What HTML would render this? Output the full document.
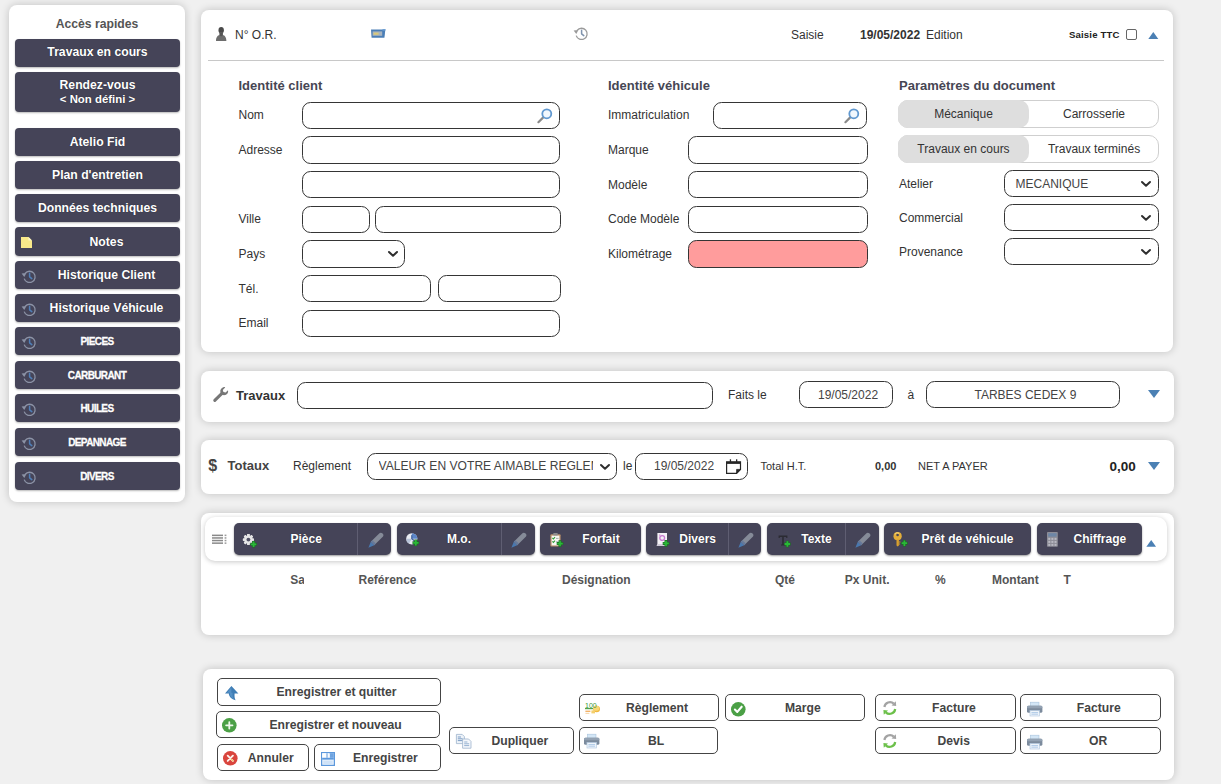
<!DOCTYPE html>
<html lang="fr">
<head>
<meta charset="utf-8">
<title>Ordre de réparation</title>
<style>
*{box-sizing:border-box;margin:0;padding:0}
html,body{width:1221px;height:784px;overflow:hidden}
body{background:#f0f0f0;font-family:"Liberation Sans",Arial,sans-serif;font-size:12px;color:#333;position:relative}
.abs,.panel,.sb,.inp,.lbl,.t,.wb,.db,svg{position:absolute}
svg{overflow:visible}
.panel{background:#fff;border-radius:8px;box-shadow:0 0 9px rgba(0,0,0,.2)}
.sb{left:15px;width:165px;height:28px;background:#454458;border-radius:4px;color:#fff;font-weight:bold;font-size:12.2px;text-align:center;line-height:29px;box-shadow:0 1px 2px rgba(0,0,0,.28);text-shadow:0 0 1px rgba(0,0,0,.5)}
.sb.sm{font-size:10px;letter-spacing:-.62px;-webkit-text-stroke:.3px #fff;padding-right:1px}
.inp{height:27px;border:1px solid #353535;border-radius:8.5px;background:#fff}
.lbl{font-size:12px;color:#333;line-height:14px;white-space:nowrap}
.h{font-weight:bold;font-size:13px;color:#464653}
.t{white-space:nowrap;line-height:14px}
.wb{height:27px;border:1px solid #444;border-radius:5px;background:#fff}
.wt{font-weight:bold;font-size:12.15px;color:#444}
.db{top:523px;height:32px;background:#454458;border-radius:5px;box-shadow:0 1px 2px rgba(0,0,0,.4)}
.dt{font-weight:bold;font-size:12px;color:#fff;top:532.4px;text-shadow:0 0 1px rgba(0,0,0,.5)}
.th{font-weight:bold;color:#555;top:573px}
</style>
</head>
<body>
<div class="panel" style="left:9px;top:5px;width:176px;height:497px"></div>
<div class="t" style="left:9px;width:176px;top:17px;text-align:center;font-weight:bold;font-size:12.2px;color:#555">Accès rapides</div>
<div class="sb" style="top:39px;line-height:27px">Travaux en cours</div>
<div class="sb" style="top:72px;height:40px;line-height:14px;padding-top:5.5px">Rendez-vous<br><span style="font-size:11.4px">&lt; Non défini &gt;</span></div>
<div class="sb" style="top:128px">Atelio Fid</div>
<div class="sb" style="top:161px">Plan d'entretien</div>
<div class="sb" style="top:194px">Données techniques</div>
<div class="sb" style="top:227px;height:29px;line-height:30px;padding-left:18px">Notes</div><svg style="left:21px;top:237px" width="11" height="11" viewBox="0 0 11 11"><path d="M0 0 H7.5 L11 3.5 V11 H0 Z" fill="#f8e98a"/><path d="M7.5 0 L11 3.5 H7.5 Z" fill="#fdf6c8"/></svg>
<div class="sb" style="top:261px;padding-left:18px">Historique Client</div><svg style="left:21px;top:270px" width="15" height="13" viewBox="0 0 15 13"><path d="M4.1 3.4 A5.6 5.6 0 1 1 3.2 8.6" fill="none" stroke="#8c93a6" stroke-width="1.3"/><path d="M0.6 3.6 L5.4 3.0 L3.3 6.9 Z" fill="#8c93a6"/><path d="M8.6 3.3 V6.8 L10.8 8.6" fill="none" stroke="#4f7fb8" stroke-width="1.5" stroke-linecap="round" stroke-linejoin="round"/></svg>
<div class="sb" style="top:294px;padding-left:18px">Historique Véhicule</div><svg style="left:21px;top:303px" width="15" height="13" viewBox="0 0 15 13"><path d="M4.1 3.4 A5.6 5.6 0 1 1 3.2 8.6" fill="none" stroke="#8c93a6" stroke-width="1.3"/><path d="M0.6 3.6 L5.4 3.0 L3.3 6.9 Z" fill="#8c93a6"/><path d="M8.6 3.3 V6.8 L10.8 8.6" fill="none" stroke="#4f7fb8" stroke-width="1.5" stroke-linecap="round" stroke-linejoin="round"/></svg>
<div class="sb sm" style="top:327px">PIECES</div><svg style="left:21px;top:336px" width="15" height="13" viewBox="0 0 15 13"><path d="M4.1 3.4 A5.6 5.6 0 1 1 3.2 8.6" fill="none" stroke="#8c93a6" stroke-width="1.3"/><path d="M0.6 3.6 L5.4 3.0 L3.3 6.9 Z" fill="#8c93a6"/><path d="M8.6 3.3 V6.8 L10.8 8.6" fill="none" stroke="#4f7fb8" stroke-width="1.5" stroke-linecap="round" stroke-linejoin="round"/></svg>
<div class="sb sm" style="top:361px">CARBURANT</div><svg style="left:21px;top:370px" width="15" height="13" viewBox="0 0 15 13"><path d="M4.1 3.4 A5.6 5.6 0 1 1 3.2 8.6" fill="none" stroke="#8c93a6" stroke-width="1.3"/><path d="M0.6 3.6 L5.4 3.0 L3.3 6.9 Z" fill="#8c93a6"/><path d="M8.6 3.3 V6.8 L10.8 8.6" fill="none" stroke="#4f7fb8" stroke-width="1.5" stroke-linecap="round" stroke-linejoin="round"/></svg>
<div class="sb sm" style="top:394px">HUILES</div><svg style="left:21px;top:403px" width="15" height="13" viewBox="0 0 15 13"><path d="M4.1 3.4 A5.6 5.6 0 1 1 3.2 8.6" fill="none" stroke="#8c93a6" stroke-width="1.3"/><path d="M0.6 3.6 L5.4 3.0 L3.3 6.9 Z" fill="#8c93a6"/><path d="M8.6 3.3 V6.8 L10.8 8.6" fill="none" stroke="#4f7fb8" stroke-width="1.5" stroke-linecap="round" stroke-linejoin="round"/></svg>
<div class="sb sm" style="top:428px">DEPANNAGE</div><svg style="left:21px;top:437px" width="15" height="13" viewBox="0 0 15 13"><path d="M4.1 3.4 A5.6 5.6 0 1 1 3.2 8.6" fill="none" stroke="#8c93a6" stroke-width="1.3"/><path d="M0.6 3.6 L5.4 3.0 L3.3 6.9 Z" fill="#8c93a6"/><path d="M8.6 3.3 V6.8 L10.8 8.6" fill="none" stroke="#4f7fb8" stroke-width="1.5" stroke-linecap="round" stroke-linejoin="round"/></svg>
<div class="sb sm" style="top:462px">DIVERS</div><svg style="left:21px;top:471px" width="15" height="13" viewBox="0 0 15 13"><path d="M4.1 3.4 A5.6 5.6 0 1 1 3.2 8.6" fill="none" stroke="#8c93a6" stroke-width="1.3"/><path d="M0.6 3.6 L5.4 3.0 L3.3 6.9 Z" fill="#8c93a6"/><path d="M8.6 3.3 V6.8 L10.8 8.6" fill="none" stroke="#4f7fb8" stroke-width="1.5" stroke-linecap="round" stroke-linejoin="round"/></svg>
<div class="panel" style="left:201px;top:10px;width:972px;height:342px"></div>
<div class="abs" style="left:208px;top:60px;width:956px;height:1px;background:#c8c8c8"></div>
<svg style="left:215.6px;top:27.3px" width="10.4" height="14" viewBox="0 0 10.4 14"><ellipse cx="5.2" cy="3.3" rx="2.7" ry="3.3" fill="#4a4a4a"/><path d="M3.6 5.5 H6.8 V8 C8.8 8.6 10.2 9.8 10.4 14 H0 C0.2 9.8 1.6 8.6 3.6 8 Z" fill="#6d6d6d"/><path d="M3.6 6 H6.8 V8.2 L5.2 9.6 L3.6 8.2Z" fill="#555"/></svg>
<div class="t" style="left:235px;top:28px">N° O.R.</div>
<svg style="left:371px;top:29.4px" width="14.4" height="8.8" viewBox="0 0 14.4 8.8"><path d="M0 0.6 H14.4 L13.4 8.8 H0.6 Z" fill="#4b7eb6"/><rect x="1.6" y="2.4" width="9.6" height="4.4" fill="#a9b4bf"/><rect x="2.6" y="3.6" width="5" height="2.2" fill="#d9c97a"/><rect x="11.5" y="0" width="3" height="1.6" fill="#6e9fd3"/></svg>
<svg style="left:573px;top:27.3px" width="15" height="13" viewBox="0 0 15 13"><path d="M4.1 3.4 A5.6 5.6 0 1 1 3.2 8.6" fill="none" stroke="#9a9a9a" stroke-width="1.3"/><path d="M0.6 3.6 L5.4 3.0 L3.3 6.9 Z" fill="#9a9a9a"/><path d="M8.6 3.3 V6.8 L10.8 8.6" fill="none" stroke="#7f93ad" stroke-width="1.5" stroke-linecap="round" stroke-linejoin="round"/></svg>
<div class="t" style="left:791px;top:28px">Saisie</div>
<div class="t" style="left:860px;top:28px;font-weight:bold">19/05/2022</div>
<div class="t" style="left:926px;top:28px">Edition</div>
<div class="t" style="left:1069px;top:27.7px;font-weight:bold;font-size:9.6px;letter-spacing:.15px;color:#222">Saisie TTC</div>
<div class="abs" style="left:1126px;top:29px;width:11px;height:11px;border:1px solid #666;border-radius:2px;background:#fff"></div>
<svg style="left:1148.4px;top:31.8px" width="10.6" height="7" viewBox="0 0 10 7"><path d="M5 0 L10 7 H0 Z" fill="#4b80b4"/></svg>
<div class="t h" style="left:238.5px;top:79px">Identité client</div>
<div class="lbl" style="left:238.5px;top:108px">Nom</div>
<div class="lbl" style="left:238.5px;top:143px">Adresse</div>
<div class="lbl" style="left:238.5px;top:212px">Ville</div>
<div class="lbl" style="left:238.5px;top:247px">Pays</div>
<div class="lbl" style="left:238.5px;top:282px">Tél.</div>
<div class="lbl" style="left:238.5px;top:316px">Email</div>
<div class="inp" style="left:302px;top:102px;width:258px;height:27px"></div>
<div class="inp" style="left:302px;top:136px;width:258px;height:28px"></div>
<div class="inp" style="left:302px;top:171px;width:258px;height:27px"></div>
<div class="inp" style="left:302px;top:206px;width:68px;height:27px"></div>
<div class="inp" style="left:375px;top:206px;width:186px;height:27px"></div>
<div class="inp" style="left:302px;top:240px;width:103px;height:28px"></div>
<div class="inp" style="left:302px;top:275px;width:129px;height:27px"></div>
<div class="inp" style="left:438px;top:275px;width:123px;height:27px"></div>
<div class="inp" style="left:302px;top:310px;width:258px;height:27px"></div>
<svg style="left:536.5px;top:108.5px" width="15" height="14" viewBox="0 0 15 14"><path d="M6 8.6 L1.4 13.2" stroke="#8a8a8a" stroke-width="2.2" stroke-linecap="round"/><circle cx="9.8" cy="4.8" r="4.5" fill="#f1f7fd" stroke="#6098d0" stroke-width="1.8"/></svg>
<svg style="left:387.5px;top:251px" width="10" height="6" viewBox="0 0 10 6"><path d="M1 1 L5 4.8 L9 1" fill="none" stroke="#2e2e2e" stroke-width="2" stroke-linecap="round" stroke-linejoin="round"/></svg>
<div class="t h" style="left:608px;top:79px">Identité véhicule</div>
<div class="lbl" style="left:608px;top:108px">Immatriculation</div>
<div class="lbl" style="left:608px;top:143px">Marque</div>
<div class="lbl" style="left:608px;top:178px">Modèle</div>
<div class="lbl" style="left:608px;top:212px">Code Modèle</div>
<div class="lbl" style="left:608px;top:247px">Kilométrage</div>
<div class="inp" style="left:713px;top:102px;width:154px"></div>
<div class="inp" style="left:688px;top:136px;width:180px;height:28px"></div>
<div class="inp" style="left:688px;top:171px;width:180px"></div>
<div class="inp" style="left:688px;top:206px;width:180px"></div>
<div class="inp" style="left:688px;top:240px;width:180px;height:28px;background:#ff9c9c"></div>
<svg style="left:844px;top:108.5px" width="15" height="14" viewBox="0 0 15 14"><path d="M6 8.6 L1.4 13.2" stroke="#8a8a8a" stroke-width="2.2" stroke-linecap="round"/><circle cx="9.8" cy="4.8" r="4.5" fill="#f1f7fd" stroke="#6098d0" stroke-width="1.8"/></svg>
<div class="t h" style="left:899px;top:79px">Paramètres du document</div>
<div class="abs" style="left:898px;top:100px;width:261px;height:28px;border:1px solid #cfcfcf;border-radius:10px;background:#fff"></div>
<div class="abs" style="left:898px;top:100px;width:131px;height:28px;background:#dedede;border-radius:10px"></div>
<div class="t" style="left:898px;width:131px;top:107px;text-align:center">Mécanique</div>
<div class="t" style="left:1029px;width:130px;top:107px;text-align:center">Carrosserie</div>
<div class="abs" style="left:898px;top:135px;width:261px;height:28px;border:1px solid #cfcfcf;border-radius:10px;background:#fff"></div>
<div class="abs" style="left:898px;top:135px;width:131px;height:28px;background:#dedede;border-radius:10px"></div>
<div class="t" style="left:898px;width:131px;top:142px;text-align:center">Travaux en cours</div>
<div class="t" style="left:1029px;width:130px;top:142px;text-align:center">Travaux terminés</div>
<div class="lbl" style="left:899px;top:177px">Atelier</div>
<div class="lbl" style="left:899px;top:211px">Commercial</div>
<div class="lbl" style="left:899px;top:245px">Provenance</div>
<div class="inp" style="left:1004px;top:170px;width:155px"></div>
<svg style="left:1141px;top:181px" width="10" height="6" viewBox="0 0 10 6"><path d="M1 1 L5 4.8 L9 1" fill="none" stroke="#2e2e2e" stroke-width="2" stroke-linecap="round" stroke-linejoin="round"/></svg>
<div class="inp" style="left:1004px;top:204px;width:155px"></div>
<svg style="left:1141px;top:215px" width="10" height="6" viewBox="0 0 10 6"><path d="M1 1 L5 4.8 L9 1" fill="none" stroke="#2e2e2e" stroke-width="2" stroke-linecap="round" stroke-linejoin="round"/></svg>
<div class="inp" style="left:1004px;top:238px;width:155px"></div>
<svg style="left:1141px;top:249px" width="10" height="6" viewBox="0 0 10 6"><path d="M1 1 L5 4.8 L9 1" fill="none" stroke="#2e2e2e" stroke-width="2" stroke-linecap="round" stroke-linejoin="round"/></svg>
<div class="t" style="left:1015.5px;top:177px;color:#444">MECANIQUE</div>
<div class="panel" style="left:201px;top:371px;width:973px;height:51px"></div>
<svg style="left:212.7px;top:387px" width="15.5" height="15.3" viewBox="0 0 15.5 15.3"><path d="M1.8 13.4 L9.2 6.2" stroke="#777" stroke-width="3.1" stroke-linecap="round"/><path d="M12.2 0.4 L9.8 2.9 L10.4 5 L12.6 5.6 L15 3.2 C15.6 5.4 14.4 7.4 12.4 8 C10.2 8.6 8 7.4 7.4 5.2 C6.8 3 8.2 0.8 10.4 0.2 C11 0 11.6 0.1 12.2 0.4Z" fill="#777"/></svg>
<div class="t h" style="left:236px;top:389px;color:#333">Travaux</div>
<div class="inp" style="left:297px;top:382px;width:416px"></div>
<div class="t" style="left:728px;top:388px">Faits le</div>
<div class="inp" style="left:799px;top:381px;width:94px"></div>
<div class="t" style="left:818px;top:388px;color:#444">19/05/2022</div>
<div class="t" style="left:907.5px;top:388px">à</div>
<div class="inp" style="left:926px;top:381px;width:194px"></div>
<div class="t" style="left:974.5px;top:388px;color:#444">TARBES CEDEX 9</div>
<svg style="left:1148px;top:390px" width="12" height="8" viewBox="0 0 12 8"><path d="M0 0 H12 L6 8 Z" fill="#4b80b4"/></svg>
<div class="panel" style="left:201px;top:440px;width:973px;height:54px"></div>
<div class="t" style="left:208.3px;top:457px;font-weight:bold;font-size:16px;line-height:18px;color:#444">$</div>
<div class="t h" style="left:227.5px;top:459px;color:#444">Totaux</div>
<div class="t" style="left:293px;top:459px">Règlement</div>
<div class="inp" style="left:367px;top:453px;width:250px"></div>
<div class="t" style="left:378.5px;top:459px;width:214.8px;overflow:hidden;color:#444;font-size:12.1px">VALEUR EN VOTRE AIMABLE REGLEMENT</div>
<svg style="left:599.5px;top:464px" width="10" height="6" viewBox="0 0 10 6"><path d="M1 1 L5 4.8 L9 1" fill="none" stroke="#2e2e2e" stroke-width="2" stroke-linecap="round" stroke-linejoin="round"/></svg>
<div class="t" style="left:623px;top:459px">le</div>
<div class="inp" style="left:635px;top:453px;width:113px"></div>
<div class="t" style="left:654px;top:459px;color:#444">19/05/2022</div>
<svg style="left:726px;top:459px" width="15.1" height="15" viewBox="0 0 15.1 15"><path d="M0.6 2.8 H14.5 V10.4 L10.6 14.3 H0.6 Z" fill="#fff" stroke="#262626" stroke-width="1.2" stroke-linejoin="miter"/><path d="M0.6 2.8 H14.5 V4.9 H0.6Z" fill="#262626"/><path d="M14.5 10.4 H10.6 V14.3 Z" fill="#262626" stroke="#262626" stroke-width="0.8"/><rect x="3.8" y="0.3" width="1.3" height="2.6" fill="#262626"/><rect x="10" y="0.3" width="1.3" height="2.6" fill="#262626"/></svg>
<div class="t" style="left:760.5px;top:459px;font-size:11px">Total H.T.</div>
<div class="t" style="left:875px;top:459px;font-size:11px;font-weight:bold">0,00</div>
<div class="t" style="left:918px;top:459px;font-size:11px">NET A PAYER</div>
<div class="t" style="left:1109.5px;top:459.7px;font-size:13.5px;font-weight:bold;color:#222">0,00</div>
<svg style="left:1148px;top:461.5px" width="12" height="8" viewBox="0 0 12 8"><path d="M0 0 H12 L6 8 Z" fill="#4b80b4"/></svg>
<div class="panel" style="left:201px;top:513px;width:973px;height:122px"></div>
<div class="panel" style="left:205px;top:517px;width:962px;height:44px;border-radius:10px;box-shadow:0 1px 5px rgba(0,0,0,.22)"></div>
<svg style="left:212px;top:534px" width="15" height="10" viewBox="0 0 15 10"><rect x="0" y="0.6" width="11" height="1.5" fill="#8a8a8a"/><rect x="12.6" y="0.6" width="1.8" height="1.5" fill="#9a9a9a"/><rect x="0" y="3.2" width="11" height="1.5" fill="#8a8a8a"/><rect x="12.6" y="3.2" width="1.8" height="1.5" fill="#9a9a9a"/><rect x="0" y="5.8" width="11" height="1.5" fill="#8a8a8a"/><rect x="12.6" y="5.8" width="1.8" height="1.5" fill="#9a9a9a"/><rect x="0" y="8.4" width="11" height="1.5" fill="#8a8a8a"/><rect x="12.6" y="8.4" width="1.8" height="1.5" fill="#9a9a9a"/></svg>
<div class="db" style="left:234px;width:157px"></div>
<div class="abs" style="left:357px;top:523px;width:1px;height:32px;background:#5f5e72"></div>
<svg style="left:243px;top:533.5px" width="14" height="14" viewBox="0 0 14 14"><rect x="4.2" y="0.1" width="2.4" height="11" rx="0.5" fill="#e6e6e6" transform="rotate(0 5.4 5.6)"/><rect x="4.2" y="0.1" width="2.4" height="11" rx="0.5" fill="#e6e6e6" transform="rotate(45 5.4 5.6)"/><rect x="4.2" y="0.1" width="2.4" height="11" rx="0.5" fill="#e6e6e6" transform="rotate(90 5.4 5.6)"/><rect x="4.2" y="0.1" width="2.4" height="11" rx="0.5" fill="#e6e6e6" transform="rotate(135 5.4 5.6)"/><rect x="4.2" y="0.1" width="2.4" height="11" rx="0.5" fill="#e6e6e6" transform="rotate(180 5.4 5.6)"/><rect x="4.2" y="0.1" width="2.4" height="11" rx="0.5" fill="#e6e6e6" transform="rotate(225 5.4 5.6)"/><rect x="4.2" y="0.1" width="2.4" height="11" rx="0.5" fill="#e6e6e6" transform="rotate(270 5.4 5.6)"/><rect x="4.2" y="0.1" width="2.4" height="11" rx="0.5" fill="#e6e6e6" transform="rotate(315 5.4 5.6)"/><circle cx="5.4" cy="5.6" r="4.1" fill="#e6e6e6"/><circle cx="5.4" cy="5.6" r="1.9" fill="#505064"/><path d="M8.8 10.3 H12.4 M10.6 8.5 V12.1" stroke="#1e6a25" stroke-width="3" stroke-linecap="square"/><path d="M8.8 10.3 H12.4 M10.6 8.5 V12.1" stroke="#2ab838" stroke-width="1.8" stroke-linecap="square"/></svg>
<div class="t dt" style="left:290.5px">Pièce</div>
<svg style="left:367.7px;top:531.5px" width="16" height="16" viewBox="0 0 16 16"><path d="M2.8 9.8 L11.2 1.4 C12.2 0.4 13.6 0.6 14.6 1.6 C15.6 2.6 15.8 3.8 14.8 4.8 L6.2 13.2 Z" fill="#858b98"/><path d="M2.8 9.8 L6.2 13.2 L0.4 15.8 Z" fill="#4a78ae"/><path d="M4.4 8.2 L7.8 11.6 L6.2 13.2 L2.8 9.8Z" fill="#66799a"/></svg>
<div class="db" style="left:397px;width:138px"></div>
<div class="abs" style="left:501px;top:523px;width:1px;height:32px;background:#5f5e72"></div>
<svg style="left:405.8px;top:533.2px" width="13" height="13" viewBox="0 0 13 13"><circle cx="5.8" cy="5.8" r="5.6" fill="#e9ecf2"/><path d="M5.8 5.8 V0.2 A5.6 5.6 0 0 1 11.4 5.8 Z" fill="#5b86c9"/><path d="M5.8 5.8 H0.2 A5.6 5.6 0 0 0 3 10.6 Z" fill="#b7c3d8"/><path d="M5.8 2.6 V5.8 L8 7.4" fill="none" stroke="#3d5f99" stroke-width="1.2" stroke-linecap="round"/><path d="M8 9.8 H11.6 M9.8 8 V11.6" stroke="#1e6a25" stroke-width="3" stroke-linecap="square"/><path d="M8 9.8 H11.6 M9.8 8 V11.6" stroke="#2ab838" stroke-width="1.8" stroke-linecap="square"/></svg>
<div class="t dt" style="left:447px">M.o.</div>
<svg style="left:511px;top:531.5px" width="16" height="16" viewBox="0 0 16 16"><path d="M2.8 9.8 L11.2 1.4 C12.2 0.4 13.6 0.6 14.6 1.6 C15.6 2.6 15.8 3.8 14.8 4.8 L6.2 13.2 Z" fill="#858b98"/><path d="M2.8 9.8 L6.2 13.2 L0.4 15.8 Z" fill="#4a78ae"/><path d="M4.4 8.2 L7.8 11.6 L6.2 13.2 L2.8 9.8Z" fill="#66799a"/></svg>
<div class="db" style="left:540px;width:101px"></div>
<svg style="left:550.2px;top:532.8px" width="13" height="13.6" viewBox="0 0 13 13.6"><rect x="0.4" y="1.2" width="10.2" height="12.2" rx="1" fill="#b9906a"/><rect x="1.6" y="2.6" width="7.8" height="9.8" fill="#f7f7f2"/><rect x="3.2" y="0" width="4.6" height="2.6" rx="0.8" fill="#8c8c8c"/><path d="M2.4 5 L3.4 6 L5 4.2 M2.4 8.4 L3.4 9.4 L5 7.6" fill="none" stroke="#2f9e3a" stroke-width="1.1"/><path d="M6 5.4 H8.6 M6 8.8 H8" stroke="#9aa" stroke-width="0.9"/><path d="M8.2 10.6 H11.8 M10 8.8 V12.4" stroke="#1e6a25" stroke-width="3" stroke-linecap="square"/><path d="M8.2 10.6 H11.8 M10 8.8 V12.4" stroke="#2ab838" stroke-width="1.8" stroke-linecap="square"/></svg>
<div class="t dt" style="left:582.3px">Forfait</div>
<div class="db" style="left:646px;width:115px"></div>
<div class="abs" style="left:728px;top:523px;width:1px;height:32px;background:#5f5e72"></div>
<svg style="left:656.3px;top:533px" width="13" height="13.4" viewBox="0 0 13 13.4"><path d="M1.4 0 H11 V10.6 C11 12 10.2 13 8.8 13 H0.2 C1.2 12.6 1.4 11.8 1.4 11 Z" fill="#f3f1f6"/><path d="M0.2 13 H8.8 C8 12.4 8 11.6 8 11 H1.4 C1.4 11.8 1.2 12.6 0.2 13Z" fill="#cfcbd8"/><circle cx="6.2" cy="5" r="2.4" fill="none" stroke="#c77ad0" stroke-width="1.3"/><rect x="3" y="1.4" width="1.4" height="1.4" fill="#d7a0dc"/><path d="M8.2 10.4 H11.8 M10 8.6 V12.2" stroke="#1e6a25" stroke-width="3" stroke-linecap="square"/><path d="M8.2 10.4 H11.8 M10 8.6 V12.2" stroke="#2ab838" stroke-width="1.8" stroke-linecap="square"/></svg>
<div class="t dt" style="left:679.3px">Divers</div>
<svg style="left:738px;top:531.5px" width="16" height="16" viewBox="0 0 16 16"><path d="M2.8 9.8 L11.2 1.4 C12.2 0.4 13.6 0.6 14.6 1.6 C15.6 2.6 15.8 3.8 14.8 4.8 L6.2 13.2 Z" fill="#858b98"/><path d="M2.8 9.8 L6.2 13.2 L0.4 15.8 Z" fill="#4a78ae"/><path d="M4.4 8.2 L7.8 11.6 L6.2 13.2 L2.8 9.8Z" fill="#66799a"/></svg>
<div class="db" style="left:767px;width:112px"></div>
<div class="abs" style="left:845px;top:523px;width:1px;height:32px;background:#5f5e72"></div>
<svg style="left:778.4px;top:534.5px" width="12.4" height="12" viewBox="0 0 12.4 12"><path d="M0.6 0.6 H9.4 V3 H8.2 V2 H5.8 V9.4 H7 V10.6 H3 V9.4 H4.2 V2 H1.8 V3 H0.6 Z" fill="#2b2b33"/><path d="M7.6 9 H11.2 M9.4 7.2 V10.8" stroke="#1e6a25" stroke-width="3" stroke-linecap="square"/><path d="M7.6 9 H11.2 M9.4 7.2 V10.8" stroke="#2ab838" stroke-width="1.8" stroke-linecap="square"/></svg>
<div class="t dt" style="left:801.2px">Texte</div>
<svg style="left:855px;top:531.5px" width="16" height="16" viewBox="0 0 16 16"><path d="M2.8 9.8 L11.2 1.4 C12.2 0.4 13.6 0.6 14.6 1.6 C15.6 2.6 15.8 3.8 14.8 4.8 L6.2 13.2 Z" fill="#858b98"/><path d="M2.8 9.8 L6.2 13.2 L0.4 15.8 Z" fill="#4a78ae"/><path d="M4.4 8.2 L7.8 11.6 L6.2 13.2 L2.8 9.8Z" fill="#66799a"/></svg>
<div class="db" style="left:884px;width:147px"></div>
<svg style="left:892.7px;top:532px" width="14.6" height="14.6" viewBox="0 0 14.6 14.6"><circle cx="4.6" cy="4.2" r="4.1" fill="#e3ae3a"/><circle cx="4.6" cy="3" r="1.3" fill="#454458"/><path d="M3.5 7.6 H5.9 V13.4 L4.7 14.4 L3.5 13.4 Z" fill="#d9a02e"/><path d="M5.9 9.4 H7.4 V10.6 H5.9 M5.9 11.4 H7 V12.6 H5.9" fill="#d9a02e"/><path d="M2 2.2 A3 3 0 0 1 6 1.2" fill="none" stroke="#f6dc8a" stroke-width="0.9"/><path d="M9.6 11.2 H13.2 M11.4 9.4 V13" stroke="#1e6a25" stroke-width="3" stroke-linecap="square"/><path d="M9.6 11.2 H13.2 M11.4 9.4 V13" stroke="#2ab838" stroke-width="1.8" stroke-linecap="square"/></svg>
<div class="t dt" style="left:921.5px">Prêt de véhicule</div>
<div class="db" style="left:1037px;width:105px"></div>
<svg style="left:1047.2px;top:532px" width="10.8" height="14.8" viewBox="0 0 10.8 14.8"><rect x="0" y="0" width="10.8" height="14.8" rx="0.8" fill="#8d8d97"/><rect x="1.2" y="1.2" width="8.4" height="3.4" fill="#6d86a6"/><rect x="1.3" y="5.9" width="2" height="2" fill="#b9b9c2"/><rect x="4.4" y="5.9" width="2" height="2" fill="#b9b9c2"/><rect x="7.5" y="5.9" width="2" height="2" fill="#b9b9c2"/><rect x="1.3" y="8.9" width="2" height="2" fill="#b9b9c2"/><rect x="4.4" y="8.9" width="2" height="2" fill="#b9b9c2"/><rect x="7.5" y="8.9" width="2" height="2" fill="#b9b9c2"/><rect x="1.3" y="11.9" width="2" height="2" fill="#b9b9c2"/><rect x="4.4" y="11.9" width="2" height="2" fill="#b9b9c2"/><rect x="7.5" y="11.9" width="2" height="2" fill="#b9b9c2"/></svg>
<div class="t dt" style="left:1073.5px">Chiffrage</div>
<svg style="left:1145.5px;top:540.3px" width="10.4" height="6.8" viewBox="0 0 10 7"><path d="M5 0 L10 7 H0 Z" fill="#4b80b4"/></svg>
<div class="t th" style="left:290.3px;width:13.6px;overflow:hidden">Sai</div>
<div class="t th" style="left:358.5px">Reférence</div>
<div class="t th" style="left:562px">Désignation</div>
<div class="t th" style="left:775px">Qté</div>
<div class="t th" style="left:844.8px">Px Unit.</div>
<div class="t th" style="left:935px">%</div>
<div class="t th" style="left:992px">Montant</div>
<div class="t th" style="left:1063.5px">T</div>
<div class="panel" style="left:203px;top:669px;width:971px;height:111px"></div>
<div class="wb" style="left:217px;top:678px;width:224px;height:28px"></div>
<svg style="left:225.3px;top:686.3px" width="13.4" height="14.3" viewBox="0 0 13.4 14.3"><path d="M6.4 0 L13.4 7.6 H9.6 C9.4 10.4 9.6 12.4 10.6 14.3 C6.6 13.4 4 11 3.8 7.6 H0 Z" fill="#3e7db5"/><path d="M6.4 1.2 L1.8 6.8 H4.6 C4.8 10.2 6.4 12 8.8 13 C7.6 11.2 7.4 9.4 7.6 6.8 H6.4Z" fill="#6aa3d6" opacity=".5"/></svg>
<div class="t wt" style="left:276.5px;top:685px">Enregistrer et quitter</div>
<div class="wb" style="left:216px;top:711px;width:224px;height:27px"></div>
<svg style="left:222.2px;top:718.3px" width="14.6" height="14.6" viewBox="0 0 14.6 14.6"><circle cx="7.3" cy="7.3" r="7.3" fill="#4ba046"/><path d="M4.1 7.3 H10.5 M7.3 4.1 V10.5" stroke="#eef8ec" stroke-width="1.8" stroke-linecap="round"/></svg>
<div class="t wt" style="left:269.5px;top:718px">Enregistrer et nouveau</div>
<div class="wb" style="left:217px;top:744px;width:92px;height:27px"></div>
<svg style="left:223.2px;top:751.2px" width="14.6" height="14.6" viewBox="0 0 14.6 14.6"><circle cx="7.3" cy="7.3" r="7.3" fill="#d9453d"/><path d="M4.7 4.7 L9.9 9.9 M9.9 4.7 L4.7 9.9" stroke="#fdf3ee" stroke-width="1.9" stroke-linecap="round"/><path d="M8.1 8.1 L9.8 9.8" stroke="#f3c56a" stroke-width="1.2" stroke-linecap="round"/></svg>
<div class="t wt" style="left:247.8px;top:751px">Annuler</div>
<div class="wb" style="left:314px;top:744px;width:127px;height:27px"></div>
<svg style="left:321px;top:751.7px" width="14" height="14" viewBox="0 0 14 14"><path d="M0.6 0.6 H13.4 V13.4 H0.6 Z" fill="#e4effb" stroke="#5c98dc" stroke-width="1.2"/><rect x="1.2" y="1.2" width="6.6" height="4.6" fill="#fdfeff"/><rect x="9" y="1.2" width="3.8" height="4.6" fill="#6fa4e0"/><rect x="1.2" y="5.8" width="11.6" height="1.8" fill="#5c98dc"/><rect x="2.4" y="8.8" width="9.2" height="4" fill="#cfe2f7"/><path d="M6 1.2 V5.8" stroke="#5c98dc" stroke-width="1"/></svg>
<div class="t wt" style="left:353px;top:751px">Enregistrer</div>
<div class="wb" style="left:449px;top:727px;width:125px;height:27px"></div>
<svg style="left:456.2px;top:734px" width="15.4" height="14.6" viewBox="0 0 15.4 14.6"><path d="M0.4 0.4 H6.2 L8.4 2.6 V9.6 H0.4 Z" fill="#eef3f9" stroke="#9db4cd" stroke-width="0.8"/><path d="M1.8 3 H5 M1.8 4.8 H6.6 M1.8 6.6 H6.6" stroke="#6f93bd" stroke-width="0.9"/><path d="M6.6 5 H12.6 L15 7.4 V14.2 H6.6 Z" fill="#f4f7fb" stroke="#9db4cd" stroke-width="0.8"/><path d="M8.2 8 H11.4 M8.2 9.8 H13.2 M8.2 11.6 H13.2" stroke="#8aa9cc" stroke-width="0.9"/></svg>
<div class="t wt" style="left:491.5px;top:734px">Dupliquer</div>
<div class="wb" style="left:579px;top:694px;width:140px;height:27px"></div>
<svg style="left:585px;top:701px" width="15.4" height="14" viewBox="0 0 15.4 14"><path d="M0 7.6 H9.6" stroke="#52a34a" stroke-width="1.2"/><ellipse cx="11.6" cy="8" rx="3.4" ry="3.2" fill="#f0b840"/><ellipse cx="11.2" cy="7.2" rx="3" ry="2.6" fill="#f8d777"/><path d="M0.4 9.6 H5.4 V11 H0.4Z" fill="#f2b26a"/><path d="M6.4 9.4 H10 V12.4 H6.4Z" fill="#f4cf6c"/><path d="M0.4 11.8 H4.4 V13 H0.4Z" fill="#f6d9b0"/><text x="0" y="6.6" font-family="Liberation Sans,sans-serif" font-size="7" fill="#3f9a3a">100</text></svg>
<div class="t wt" style="left:626px;top:701px">Règlement</div>
<div class="wb" style="left:579px;top:727px;width:139px;height:27px"></div>
<svg style="left:584px;top:734px" width="15.4" height="14.4" viewBox="0 0 15.4 14.4"><rect x="3.4" y="0.2" width="8.6" height="4.6" fill="#d3e6f6" stroke="#a9c3dc" stroke-width="0.6"/><rect x="0" y="3.8" width="15.4" height="7" rx="1.6" fill="#7c8b9d"/><rect x="0" y="3.8" width="15.4" height="2.4" rx="1.2" fill="#93a2b3"/><rect x="3" y="8.6" width="9.4" height="5.4" fill="#eef4fa" stroke="#b5cbe2" stroke-width="0.7"/><path d="M4.4 10.6 H11 M4.4 12.2 H11" stroke="#a9c6e6" stroke-width="0.9"/></svg>
<div class="t wt" style="left:648px;top:734px">BL</div>
<div class="wb" style="left:725px;top:694px;width:140px;height:27px"></div>
<svg style="left:731.2px;top:701.6px" width="14.6" height="14.6" viewBox="0 0 14.6 14.6"><circle cx="7.3" cy="7.3" r="7.3" fill="#4ba046"/><path d="M3.9 7.5 L6.3 9.9 L10.7 4.7" fill="none" stroke="#fff" stroke-width="2.1" stroke-linecap="round" stroke-linejoin="round"/></svg>
<div class="t wt" style="left:785px;top:701px">Marge</div>
<div class="wb" style="left:875px;top:694px;width:141px;height:27px"></div>
<svg style="left:882.8px;top:701px" width="13.6" height="14" viewBox="0 0 13.6 14"><path d="M1.4 6 A5.6 5.6 0 0 1 10.8 2.6" fill="none" stroke="#a3a3a3" stroke-width="2.2"/><path d="M8.6 4.6 L13.2 5 L12.8 0.2 Z" fill="#a3a3a3"/><path d="M12.2 8 A5.6 5.6 0 0 1 2.8 11.4" fill="none" stroke="#6cc04a" stroke-width="2.2"/><path d="M5 9.4 L0.4 9 L0.8 13.8 Z" fill="#6cc04a"/></svg>
<div class="t wt" style="left:932px;top:701px">Facture</div>
<div class="wb" style="left:875px;top:727px;width:141px;height:27px"></div>
<svg style="left:882.8px;top:734px" width="13.6" height="14" viewBox="0 0 13.6 14"><path d="M1.4 6 A5.6 5.6 0 0 1 10.8 2.6" fill="none" stroke="#a3a3a3" stroke-width="2.2"/><path d="M8.6 4.6 L13.2 5 L12.8 0.2 Z" fill="#a3a3a3"/><path d="M12.2 8 A5.6 5.6 0 0 1 2.8 11.4" fill="none" stroke="#6cc04a" stroke-width="2.2"/><path d="M5 9.4 L0.4 9 L0.8 13.8 Z" fill="#6cc04a"/></svg>
<div class="t wt" style="left:937.5px;top:734px">Devis</div>
<div class="wb" style="left:1020px;top:694px;width:141px;height:27px"></div>
<svg style="left:1027px;top:701.5px" width="15.4" height="14.4" viewBox="0 0 15.4 14.4"><rect x="3.4" y="0.2" width="8.6" height="4.6" fill="#d3e6f6" stroke="#a9c3dc" stroke-width="0.6"/><rect x="0" y="3.8" width="15.4" height="7" rx="1.6" fill="#7c8b9d"/><rect x="0" y="3.8" width="15.4" height="2.4" rx="1.2" fill="#93a2b3"/><rect x="3" y="8.6" width="9.4" height="5.4" fill="#eef4fa" stroke="#b5cbe2" stroke-width="0.7"/><path d="M4.4 10.6 H11 M4.4 12.2 H11" stroke="#a9c6e6" stroke-width="0.9"/></svg>
<div class="t wt" style="left:1076.8px;top:701px">Facture</div>
<div class="wb" style="left:1020px;top:727px;width:141px;height:27px"></div>
<svg style="left:1027px;top:734.5px" width="15.4" height="14.4" viewBox="0 0 15.4 14.4"><rect x="3.4" y="0.2" width="8.6" height="4.6" fill="#d3e6f6" stroke="#a9c3dc" stroke-width="0.6"/><rect x="0" y="3.8" width="15.4" height="7" rx="1.6" fill="#7c8b9d"/><rect x="0" y="3.8" width="15.4" height="2.4" rx="1.2" fill="#93a2b3"/><rect x="3" y="8.6" width="9.4" height="5.4" fill="#eef4fa" stroke="#b5cbe2" stroke-width="0.7"/><path d="M4.4 10.6 H11 M4.4 12.2 H11" stroke="#a9c6e6" stroke-width="0.9"/></svg>
<div class="t wt" style="left:1089px;top:734px">OR</div>
</body>
</html>
